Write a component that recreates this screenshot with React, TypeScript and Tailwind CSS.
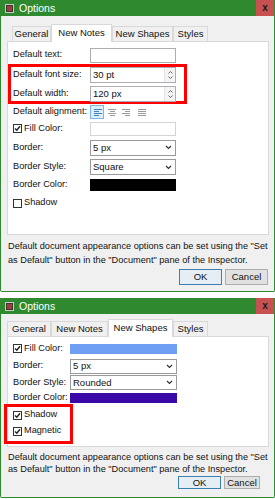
import React from "react";

const FONT = { fontFamily: '"Liberation Sans", Arial, sans-serif' };

function Check({ on }: { on: boolean }) {
  return (
    <span className="w-[9px] h-[9px] border border-[#333] bg-white flex items-center justify-center shrink-0">
      {on && (
        <svg width="7" height="7" viewBox="0 0 7 7">
          <path d="M1 3.5 L2.8 5.3 L6 1.2" stroke="#222" strokeWidth="1.4" fill="none" />
        </svg>
      )}
    </span>
  );
}

function Chevron() {
  return (
    <svg width="7" height="5" viewBox="0 0 7 5" className="mr-[3px]">
      <path d="M1 1 L3.5 3.5 L6 1" stroke="#333" strokeWidth="1.2" fill="none" />
    </svg>
  );
}

function Spinner() {
  return (
    <span className="flex flex-col items-center justify-center w-[11px] h-full border-l border-[#e3e3e3] bg-[#f4f4f4] gap-[2px]">
      <svg width="5" height="3" viewBox="0 0 5 3">
        <path d="M0.5 2.5 L2.5 0.5 L4.5 2.5" stroke="#666" fill="none" />
      </svg>
      <svg width="5" height="3" viewBox="0 0 5 3">
        <path d="M0.5 0.5 L2.5 2.5 L4.5 0.5" stroke="#666" fill="none" />
      </svg>
    </span>
  );
}

function Align({ kind, active }: { kind: "l" | "c" | "r" | "j"; active?: boolean }) {
  const rows = [8, 5, 8, 5];
  return (
    <span
      className={`w-[14px] h-[14px] flex flex-col justify-center gap-[1px] px-[3px] ${
        active ? "bg-[#dbeeff] border border-[#7eb4ea]" : "border border-transparent"
      } ${kind === "l" ? "items-start" : kind === "r" ? "items-end" : "items-center"}`}
    >
      {rows.map((w, i) => (
        <span
          key={i}
          className={`h-px block ${active ? "bg-[#4a7fb8]" : "bg-[#9a9a9a]"}`}
          style={{ width: kind === "j" ? 8 : w }}
        />
      ))}
    </span>
  );
}

function TitleBar() {
  return (
    <div className="h-[16px] bg-[#2f8a2f] flex items-center shrink-0">
      <span className="ml-[4px] w-[9px] h-[9px] bg-[#4a2f2f] border border-[#c9c9c9] flex items-center justify-center">
        <span className="w-[5px] h-[5px] bg-[#9a4040]" />
      </span>
      <span className="ml-[5px] text-white text-[10.5px] leading-none">Options</span>
      <span className="ml-auto w-[18px] h-full bg-[#c75050] flex items-center justify-center text-[10px] font-bold text-[#1a1a1a] leading-none">
        x
      </span>
    </div>
  );
}

function Tabs({ items, active }: { items: { label: string; w: number; ml?: number }[]; active: number }) {
  return (
    <div className="flex items-end h-[15px] shrink-0 relative z-10">
      {items.map((t, i) => (
        <div
          key={t.label}
          className={`flex items-center justify-center text-[9.5px] leading-none border border-b-0 whitespace-nowrap ${
            i === active
              ? "bg-white border-[#d9d9d9] h-[18px] pb-[1px] -mb-px"
              : "bg-[#f0f0f0] border-[#d9d9d9] h-[15px]"
          }`}
          style={{ width: t.w, marginLeft: t.ml ?? 0 }}
        >
          {t.label}
        </div>
      ))}
    </div>
  );
}

function Footer({
  cancelW,
  lh,
  btnH,
  btnMt,
  pr = "",
}: {
  cancelW: number;
  lh: string;
  btnH: string;
  btnMt: string;
  pr?: string;
}) {
  return (
    <>
      <p className={`text-[9.2px] ${lh} text-[#111] mt-[4px] ml-[1px]`}>
        Default document appearance options can be set using the "Set as Default" button in the "Document" pane of the
        Inspector.
      </p>
      <div className={`flex justify-end gap-[3px] ${btnMt} ${pr}`}>
        <button className={`w-[43px] ${btnH} bg-[#e5edf5] border border-[#3c7fb1] text-[9.5px] leading-none`}>
          OK
        </button>
        <button
          className={`${btnH} bg-[#e1e1e1] border border-[#adadad] text-[9.5px] leading-none`}
          style={{ width: cancelW }}
        >
          Cancel
        </button>
      </div>
    </>
  );
}

function Label({ children, w }: { children: React.ReactNode; w: number }) {
  return (
    <span className="text-[9.2px] leading-none text-[#111] shrink-0 whitespace-nowrap" style={{ width: w }}>
      {children}
    </span>
  );
}

function Field({ w, h, children, border = "border-[#9a9a9a]" }: { w: number; h: number; children?: React.ReactNode; border?: string }) {
  return (
    <span
      className={`border ${border} bg-white flex items-center text-[9.5px] leading-none pl-[2px]`}
      style={{ width: w, height: h }}
    >
      {children}
    </span>
  );
}

function WindowOne() {
  return (
    <div className="w-[275px] h-[292px] flex flex-col border-x border-b border-[#2f8a2f] bg-[#f0f0f0] rounded-b-[2px]">
      <TitleBar />
      <div className="pl-[6px] pr-[6px] mt-[10px]">
        <Tabs
          active={1}
          items={[
            { label: "General", w: 39, ml: 5 },
            { label: "New Notes", w: 61 },
            { label: "New Shapes", w: 61 },
            { label: "Styles", w: 35 },
          ]}
        />
        <div className="h-[194px] w-[262px] bg-white border border-[#d9d9d9] pt-[4px]">
          <div className="h-[18px] flex items-center pl-[5px]">
            <Label w={77}>Default text:</Label>
            <Field w={86} h={15} border="border-[#abadb3]" />
          </div>
          <div className="h-[40px] w-[179px] border-[3px] border-[#ff0000] pl-[2px] flex flex-col justify-center gap-[3px]">
            <div className="flex items-center">
              <Label w={77}>Default font size:</Label>
              <Field w={86} h={16} border="border-[#abadb3]">
                <span className="flex-1">30 pt</span>
                <Spinner />
              </Field>
            </div>
            <div className="flex items-center">
              <Label w={77}>Default width:</Label>
              <Field w={86} h={16} border="border-[#abadb3]">
                <span className="flex-1">120 px</span>
                <Spinner />
              </Field>
            </div>
          </div>
          <div className="h-[16px] flex items-center pl-[5px]">
            <Label w={77}>Default alignment:</Label>
            <div className="flex gap-[1px]">
              <Align kind="l" active />
              <Align kind="c" />
              <Align kind="r" />
              <Align kind="j" />
            </div>
          </div>
          <div className="h-[18px] flex items-center pl-[5px]">
            <span className="w-[77px] flex items-center gap-[2px]">
              <Check on />
              <span className="text-[9.2px] leading-none">Fill Color:</span>
            </span>
            <Field w={86} h={14} border="border-[#d4d4d4]" />
          </div>
          <div className="h-[19px] flex items-center pl-[5px]">
            <Label w={77}>Border:</Label>
            <Field w={86} h={16}>
              <span className="flex-1">5 px</span>
              <Chevron />
            </Field>
          </div>
          <div className="h-[20px] flex items-center pl-[5px]">
            <Label w={77}>Border Style:</Label>
            <Field w={86} h={16}>
              <span className="flex-1">Square</span>
              <Chevron />
            </Field>
          </div>
          <div className="h-[16px] flex items-center pl-[5px]">
            <Label w={77}>Border Color:</Label>
            <span className="w-[86px] h-[12px] bg-black" />
          </div>
          <div className="h-[20px] flex items-center pl-[5px] gap-[2px]">
            <Check on={false} />
            <span className="text-[9.2px] leading-none">Shadow</span>
          </div>
        </div>
        <Footer cancelW={43} lh="leading-[14px]" btnH="h-[16px]" btnMt="mt-[2px]" />
      </div>
    </div>
  );
}

function WindowTwo() {
  return (
    <div className="w-[275px] h-[200px] flex flex-col border-x border-b border-[#2f8a2f] bg-[#f0f0f0] rounded-b-[2px]">
      <TitleBar />
      <div className="pl-[6px] pr-[6px] mt-[7px]">
        <Tabs
          active={2}
          items={[
            { label: "General", w: 44 },
            { label: "New Notes", w: 57 },
            { label: "New Shapes", w: 65 },
            { label: "Styles", w: 35 },
          ]}
        />
        <div className="h-[111px] w-[262px] bg-white border border-[#d9d9d9] pt-[3px]">
          <div className="h-[18px] flex items-center pl-[5px]">
            <span className="w-[57px] flex items-center gap-[2px]">
              <Check on />
              <span className="text-[9.2px] leading-none">Fill Color:</span>
            </span>
            <span className="w-[107px] h-[10px] bg-[#6f9ff5]" />
          </div>
          <div className="h-[16px] flex items-center pl-[5px]">
            <Label w={57}>Border:</Label>
            <Field w={107} h={15}>
              <span className="flex-1">5 px</span>
              <Chevron />
            </Field>
          </div>
          <div className="h-[17px] flex items-center pl-[5px]">
            <Label w={57}>Border Style:</Label>
            <Field w={107} h={15}>
              <span className="flex-1">Rounded</span>
              <Chevron />
            </Field>
          </div>
          <div className="h-[13px] flex items-center pl-[5px]">
            <Label w={57}>Border Color:</Label>
            <span className="w-[107px] h-[10px] bg-[#3a0aa8]" />
          </div>
          <div className="h-[40px] w-[69px] -ml-[4px] border-[3px] border-[#ff0000] pl-[6px] flex flex-col">
            <div className="h-[16px] flex items-center gap-[2px]">
              <Check on />
              <span className="text-[9.2px] leading-none">Shadow</span>
            </div>
            <div className="h-[16px] flex items-center gap-[2px]">
              <Check on />
              <span className="text-[9.2px] leading-none">Magnetic</span>
            </div>
          </div>
        </div>
        <Footer cancelW={36} lh="leading-[12px]" btnH="h-[13px]" btnMt="mt-[1px]" pr="pr-[8px]" />
      </div>
    </div>
  );
}

export default function App() {
  return (
    <div className="w-[275px] h-[499px] bg-white overflow-hidden text-[#111]" style={FONT}>
      <WindowOne />
      <div className="h-[6px]" />
      <WindowTwo />
    </div>
  );
}
